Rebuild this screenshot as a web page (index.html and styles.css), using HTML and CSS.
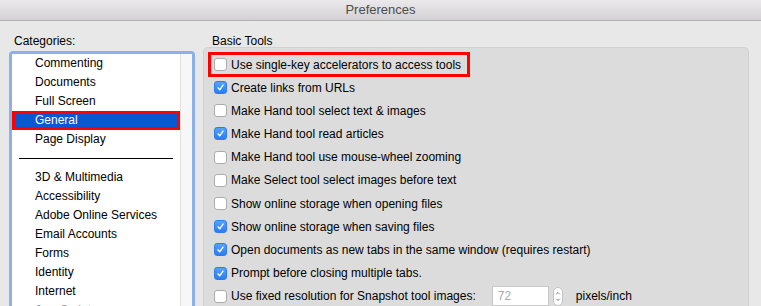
FILE: index.html
```html
<!DOCTYPE html>
<html lang="en">
<head>
  <meta charset="UTF-8">
  <title>Preferences</title>
  <link rel="stylesheet" href="styles.css">
</head>
<body>
  <header class="titlebar">Preferences</header>

  <div class="content">
    <!-- Left: categories -->
    <section class="categories">
      <h2 class="label">Categories:</h2>
      <div class="list">
        <ul class="items">
          <li>Commenting</li>
          <li>Documents</li>
          <li>Full Screen</li>
          <li class="selected">General</li>
          <li>Page Display</li>
          <li class="divider"><hr></li>
          <li>3D &amp; Multimedia</li>
          <li>Accessibility</li>
          <li>Adobe Online Services</li>
          <li>Email Accounts</li>
          <li>Forms</li>
          <li>Identity</li>
          <li>Internet</li>
          <li class="faded">JavaScript</li>
        </ul>
        <div class="track"></div>
      </div>
    </section>

    <!-- Right: basic tools -->
    <section class="tools">
      <h2 class="label">Basic Tools</h2>
      <div class="panel">
        <label class="opt marked"><span class="box"></span>Use single-key accelerators to access tools</label>
        <label class="opt"><span class="box on"><svg viewBox="0 0 13 13"><path d="M3.6 6.9 L5.6 9.2 L9.4 3.6"/></svg></span>Create links from URLs</label>
        <label class="opt"><span class="box"></span>Make Hand tool select text &amp; images</label>
        <label class="opt"><span class="box on"><svg viewBox="0 0 13 13"><path d="M3.6 6.9 L5.6 9.2 L9.4 3.6"/></svg></span>Make Hand tool read articles</label>
        <label class="opt"><span class="box"></span>Make Hand tool use mouse-wheel zooming</label>
        <label class="opt"><span class="box"></span>Make Select tool select images before text</label>
        <label class="opt"><span class="box"></span>Show online storage when opening files</label>
        <label class="opt"><span class="box on"><svg viewBox="0 0 13 13"><path d="M3.6 6.9 L5.6 9.2 L9.4 3.6"/></svg></span>Show online storage when saving files</label>
        <label class="opt"><span class="box on"><svg viewBox="0 0 13 13"><path d="M3.6 6.9 L5.6 9.2 L9.4 3.6"/></svg></span>Open documents as new tabs in the same window (requires restart)</label>
        <label class="opt"><span class="box on"><svg viewBox="0 0 13 13"><path d="M3.6 6.9 L5.6 9.2 L9.4 3.6"/></svg></span>Prompt before closing multiple tabs.</label>
        <div class="opt">
          <span class="box"></span>Use fixed resolution for Snapshot tool images:
          <span class="num">72</span>
          <span class="spin"><svg viewBox="0 0 9 19"><path d="M2.5 7 L4.5 5 L6.5 7 M2.5 12 L4.5 14 L6.5 12"/></svg></span>
          <span class="unit">pixels/inch</span>
        </div>
      </div>
    </section>
  </div>
</body>
</html>
```

FILE: styles.css
```css
html, body {
  margin: 0;
  padding: 0;
  height: 306px;
  overflow: hidden;
}

body {
  font-family: "Liberation Sans", Arial, sans-serif;
  font-size: 12px;
  color: #000;
  background: #e8e8e8;
}

.titlebar {
  height: 20px;
  line-height: 20px;
  text-align: center;
  font-size: 13px;
  color: #4d4d4d;
  background: linear-gradient(#ebe9eb, #d3d1d3);
  border-bottom: 1px solid #b2b2b2;
}

.content {
  display: flex;
  gap: 8px;
  padding-left: 9px;
}

.label {
  margin: 0;
  padding-top: 13px;
  font-size: 12px;
  font-weight: normal;
  line-height: 14px;
}

/* Categories list */
.categories {
  width: 186px;
  flex: none;
}

.categories .label {
  padding-left: 5px;
  margin-bottom: 3px;
}

.list {
  display: flex;
  height: 270px;
  border: 3px solid #8bb0ea;
  border-bottom: 0;
  border-radius: 4px 4px 0 0;
  background: #fff;
}

.items {
  list-style: none;
  margin: 0;
  padding: 0;
  flex: 1;
}

.items li {
  height: 19px;
  line-height: 19px;
  padding-left: 23px;
  white-space: nowrap;
}

.items li.selected {
  background: #0b57d2;
  color: #fff;
  box-shadow: inset 0 0 0 3px #f00;
}

.items li.faded {
  color: #9a9a9a;
}

.items li.divider {
  box-sizing: border-box;
  padding: 9px 7px 0 7px;
}

.divider hr {
  margin: 0;
  border: 0;
  border-top: 1px solid #000;
}

.track {
  width: 11px;
  flex: none;
  background: #f7f7f7;
  border-left: 1px solid #e2e2e2;
}

/* Basic tools panel */
.tools {
  width: 546px;
  flex: none;
}

.tools .label {
  padding-left: 9px;
  margin-bottom: -1px;
}

.panel {
  height: 270px;
  padding: 4px 0 0 4px;
  background: #dcdcdc;
  border: 1px solid #d1d1d1;
  border-bottom: 0;
  border-radius: 5px 5px 0 0;
}

.opt {
  display: flex;
  align-items: center;
  gap: 4px;
  height: 23.2px;
  padding-left: 6px;
  white-space: nowrap;
}

.opt.marked {
  width: fit-content;
  height: 19px;
  padding: 0 6px 0 3px;
  border: 3px solid #f00;
  margin-bottom: -1px;
}

.box {
  width: 13px;
  height: 13px;
  box-sizing: border-box;
  flex: none;
  background: #fff;
  border: 1px solid #acacac;
  border-radius: 3px;
}

.box.on {
  background: linear-gradient(#55a3fa, #2b7cf1);
  border-color: #2f7cec;
}

.box svg {
  display: block;
  width: 11px;
  height: 11px;
}

.box svg path {
  fill: none;
  stroke: #fff;
  stroke-width: 1.6;
  stroke-linecap: round;
  stroke-linejoin: round;
}

.num {
  box-sizing: border-box;
  width: 57px;
  height: 20px;
  line-height: 18px;
  margin-left: 12px;
  padding-left: 5px;
  color: #a9a9a9;
  background: #fff;
  border: 1px solid #c9c9c9;
}

.spin {
  box-sizing: border-box;
  width: 10px;
  height: 19px;
  margin-left: 0;
  background: #fff;
  border: 1px solid #c2c2c2;
  border-radius: 5px;
}

.spin svg {
  display: block;
  width: 8px;
  height: 17px;
}

.spin svg path {
  fill: none;
  stroke: #6f6f6f;
  stroke-width: 1;
}

.unit {
  margin-left: 9px;
}
```
